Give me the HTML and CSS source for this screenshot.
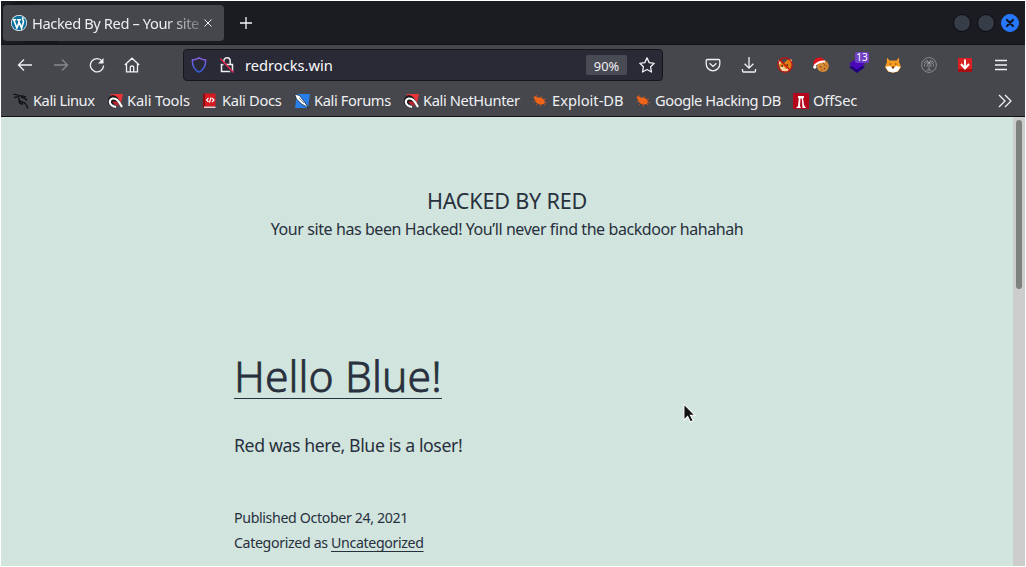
FILE: index.html
```html
<!DOCTYPE html>
<html lang="en">
<head>
<meta charset="utf-8">
<title>Hacked By Red</title>
<link rel="stylesheet" href="styles.css">
</head>
<body>
<div class="window">
  <header class="tabbar">
    <svg class="shade" viewBox="0 0 100 45"><path d="M0 9Q8 2 18 0H42Q18 4 0 17zM18 45Q42 28 55 5L76 10Q65 35 55 45z"/></svg>
    <div class="tab">
      <svg class="wp" viewBox="0 0 16 16"><circle cx="8" cy="8" r="8" fill="#fff"/><circle cx="8" cy="8" r="7.3" fill="#08709f"/><path d="M2 4.8h3.2M6 4.8h4M2.8 5l3.1 8 2.4-6.4M7.4 5l3.1 8 1.9-5.8Q12.6 5.8 11.8 4.6 11 3 12.6 2.5" fill="none" stroke="#fff" stroke-width="1.6"/></svg>
      <span class="tab-title">Hacked By Red – Your site</span>
      <svg class="tab-close" viewBox="0 0 8 8"><path d="M.5.5l7 7M7.5.5l-7 7"/></svg>
    </div>
    <svg class="plus" viewBox="0 0 12 12"><path d="M6 0v12M0 6h12"/></svg>
    <div class="controls">
      <i class="dot"></i><i class="dot"></i>
      <i class="dot close"><svg viewBox="0 0 10 10"><path d="M2 2l6 6M8 2L2 8"/></svg></i>
    </div>
  </header>
  <nav class="toolbar">
    <svg class="ic" viewBox="0 0 16 16"><path d="M15 8H1.5M7 2.5L1.5 8 7 13.500"/></svg>
    <svg class="ic dim" viewBox="0 0 16 16"><path d="M1 8h13.500M9 2.500L14.500 8 9 13.500"/></svg>
    <svg class="ic" viewBox="0 0 16 16"><path d="M13.200 4.200A6.600 6.600 0 1 0 14.600 8.500"/><path d="M14.500 1v5.500H9z" fill="#f5f5f8" stroke="none"/></svg>
    <svg class="ic home" viewBox="0 0 16 16"><path d="M.8 8L8 1.200 15.200 8M2.500 7v7.800h11V7M6.300 14.500V10q0-1 1.700-1t1.700 1v4.500"/></svg>
    <div class="url">
      <svg class="uic" viewBox="0 0 16 16"><defs><linearGradient id="sh" x2="0" y2="1"><stop stop-color="#8a62e8"/><stop offset="1" stop-color="#2f5fe0"/></linearGradient></defs><path d="M8 .8Q11 2.700 14.600 3 15 11.500 8 15.200 1 11.500 1.400 3 5 2.700 8 .8z" fill="none" stroke="url(#sh)" stroke-width="1.400"/></svg>
      <svg class="uic lock" viewBox="0 0 16 16"><path d="M4.800 7V4.200a3.200 3.400 0 0 1 6.400 0V7M2.500 7.500h11v7h-11z" fill="none" stroke="#eee" stroke-width="1.500"/><path d="M1.500 3l12.500 13" stroke="#2a2a37" stroke-width="2.200"/><path d="M1.200 1.500L14.500 15.500" stroke="#e22850" stroke-width="1.500"/></svg>
      <span class="address">redrocks.win</span>
      <span class="zoom">90%</span>
      <svg class="ic star" viewBox="0 0 16 16"><path d="M8 .9l2.200 4.700 5 .7-3.600 3.500.9 5.200L8 12.500l-4.500 2.500.9-5.200L.8 6.300l5-.7z" stroke-linejoin="round"/></svg>
    </div>
    <div class="extensions">
      <svg class="ic" viewBox="0 0 16 16"><path d="M2.500 2.500h11q1.300 0 1.300 1.300V7a6.800 6.800 0 0 1-13.600 0V3.800q0-1.300 1.300-1.300zM4.600 6.200L8 9.400l3.400-3.200"/></svg>
      <svg class="ic" viewBox="0 0 16 16"><path d="M8 0v11M3.600 6.800L8 11.200l4.400-4.400M1.500 12v2q0 1 1 1h11q1 0 1-1v-2"/></svg>
      <svg viewBox="0 0 16 16"><path d="M1 5l1-2 5 3 3-3 4-1 1 6-2 5-5 2-5-3z" fill="#e07c14"/><path d="M1 4l1-1 2 3-2 2zM13 2l2 1v4z" fill="#f3dfc8"/><path d="M3 10l3-1 3 3 4-1-3 3.500-5-.5z" fill="#f6d2a0"/><path d="M4.500 9h1.500M9.500 8H11" stroke="#3f240c" stroke-width="1.300"/><circle cx="8" cy="8" r="7.200" fill="none" stroke="#c8100e" stroke-width="1.200"/><path d="M3 3l10 10" stroke="#c8100e" stroke-width="1.300"/></svg>
      <svg viewBox="0 0 16 16"><circle cx="9.800" cy="9" r="6" fill="#d88b35"/><path d="M11 8h1M6.500 10h2M11 12l1-1M8.500 13h1M13 9h1M10 5.800h1" stroke="#743d15" stroke-width="1.200"/><path d="M.5 9Q0 2 4 1q5-2 8 3L3 8z" fill="#df1418"/><path d="M1.500 8.500Q6 4 12 4.500" fill="none" stroke="#fff" stroke-width="2"/><circle cx="1.800" cy="10" r="1.700" fill="#fff"/></svg>
      <div class="stack"><svg viewBox="0 0 16 16"><path d="M0 10l8-4 8 4-8 6z" fill="#210080"/><path d="M0 7l8-6 8 6-8 5.500z" fill="#4a08b8"/></svg><span class="badge">13</span></div>
      <svg viewBox="0 0 16 16"><path d="M2 .5l2.500 3h7l2.500-3 .2 5L16 10l-3 4.500-5 1.200-5-1.200L0 10l1.800-4.500z" fill="#f59b22"/><path d="M.5 10l4-1L8 11l3.500-2 4 1-3 4.500L8 15.500l-4.500-1z" fill="#fff"/><path d="M4.500 7H6M10 7h1.500M7 10h2L8 11.500z" stroke="#6b3208" fill="#3b1b08"/></svg>
      <svg viewBox="0 0 16 16" class="palm"><circle cx="8" cy="8" r="7.400"/><path d="M8 6v7M5.500 13h5M8 6Q5 2 3 6M8 6q3-4 5 0M8 6Q3 5 3.500 9.500M8 6q5-1 4.500 3.500M8 6Q5.500 7 6 10M8 6q2.500 1 2 4M8 6L6 3M8 6l2-3"/></svg>
      <svg viewBox="0 0 16 16"><path d="M1 1h14v14H1z" fill="#db2024"/><path d="M1 12h14v3H1z" fill="#a70f13"/><path d="M8 2.500v8M4 7l4 4.500L12 7" fill="none" stroke="#fff" stroke-width="2"/></svg>
      <svg class="ic menu" viewBox="0 0 16 16"><path d="M2 3.500h12M2 8h12M2 12.500h12"/></svg>
    </div>
  </nav>
  <nav class="bookmarks">
    <div class="bm b1"><svg viewBox="0 0 16 16"><path d="M.5 1.500Q4 1 6 3q4-.5 7 1M1 4.500Q5 3 6 5.500q0 3 3 3.500t4 2.500 2 4M6 7.500Q5.500 11 10 11M8 4q4 .5 6 3.500" fill="none" stroke="#101114" stroke-width="1.350"/></svg><span>Kali Linux</span></div>
    <div class="bm b2"><svg viewBox="0 0 16 16"><path d="M3 1h13l-2.500 11L9 9z" fill="#e73538"/><path d="M1 7Q1.500 3 6 2q6 1 8 9l-6-3-3 6Q0 12 1 7z" fill="#19191c"/><path d="M15 14L12 9Q9.500 5 5.500 5.500 2 7 3 10t6 4" fill="none" stroke="#fff" stroke-width="2.100"/><path d="M8 2.500L15.500 1.500 13.500 9Q11.500 4 8 2.500z" fill="#e73538"/><path d="M5 9q4-2 7 4L9 12z" fill="#cc1d28"/></svg><span>Kali Tools</span></div>
    <div class="bm b3"><svg viewBox="0 0 16 16"><path d="M2 .5h11.500v13H2z" fill="#d71920"/><path d="M1 .5h2v14.500H1z" fill="#8c0c12"/><path d="M2 13.500h11.500V15H2z" fill="#e9cfcf"/><path d="M6.500 5L4.500 7l2 2M10 5l2 2-2 2M7.500 9.500l1.500-5" fill="none" stroke="#fff" stroke-width="1.200"/></svg><span>Kali Docs</span></div>
    <div class="bm b4"><svg viewBox="0 0 16 16"><path d="M3 1h13l-2 14H1z" fill="#287fe8"/><path d="M.5 1l5 1.500 5 6.500 4 6-7-4-5-5z" fill="#fff" stroke="#16243a" stroke-width=".8"/><path d="M5 5l5 5" stroke="#526578" stroke-width=".7"/></svg><span>Kali Forums</span></div>
    <div class="bm b5"><svg viewBox="0 0 16 16"><path d="M3 1h13l-2.500 11L9 9z" fill="#e73538"/><path d="M1 7Q1.500 3 6 2q6 1 8 9l-6-3-3 6Q0 12 1 7z" fill="#19191c"/><path d="M15 14L12 9Q9.500 5 5.500 5.500 2 7 3 10t6 4" fill="none" stroke="#fff" stroke-width="2.100"/><path d="M8 2.500L15.500 1.500 13.500 9Q11.500 4 8 2.500z" fill="#e73538"/><path d="M5 9q4-2 7 4L9 12z" fill="#cc1d28"/></svg><span>Kali NetHunter</span></div>
    <div class="bm b6"><svg viewBox="0 0 16 16"><path d="M1.500 4Q3 2.500 5 4.500l3 0q4 .5 5 4.500l-1 2-4 .7-3.500-2L3 7z" fill="#f06418"/><path d="M5 4L4 2M8 5l2-2M11 6.500l3-.5M12 9l3 1M4 8L1.500 9M6 10l-2 2M9 11l-1 2.500M12 11l1.500 1.500" stroke="#b9562a" stroke-width=".9"/></svg><span>Exploit-DB</span></div>
    <div class="bm b7"><svg viewBox="0 0 16 16"><path d="M1.500 4Q3 2.500 5 4.500l3 0q4 .5 5 4.500l-1 2-4 .7-3.500-2L3 7z" fill="#f06418"/><path d="M5 4L4 2M8 5l2-2M11 6.500l3-.5M12 9l3 1M4 8L1.500 9M6 10l-2 2M9 11l-1 2.500M12 11l1.500 1.500" stroke="#b9562a" stroke-width=".9"/></svg><span>Google Hacking DB</span></div>
    <div class="bm b8"><svg viewBox="0 0 16 16"><path d="M0 0h16v16H0z" fill="#b5071c"/><path d="M5 3h6v2h-1l1 7 2 3H9.500L8.800 5.500H7.500L7 13l1 2H3l2-2 .8-8H5z" fill="#fff"/></svg><span>OffSec</span></div>
    <svg class="ic more" viewBox="0 0 16 16"><path d="M2 2l6 6-6 6M8 2l6 6-6 6"/></svg>
  </nav>
  <main class="page">
    <div class="content">
      <h1>HACKED BY RED</h1>
      <p class="tagline">Your site has been Hacked! You’ll never find the backdoor hahahah</p>
      <article>
        <h2><a>Hello Blue!</a></h2>
        <p class="text">Red was here, Blue is a loser!</p>
        <p class="meta m1">Published October 24, 2021</p>
        <p class="meta">Categorized as <a class="cat">Uncategorized</a></p>
      </article>
    </div>
    <div class="scroll"><div class="thumb"></div></div>
  </main>
</div>
<svg class="cursor" viewBox="0 0 14 22"><path d="M1 1v17l4-4 3 6 3-1.500-3-5.500h5z" fill="#111" stroke="#fff" stroke-width="1.100"/></svg>
</body>
</html>
```
FILE: styles.css
```css
* { box-sizing: border-box; }
body { margin: 0; width: 1026px; height: 567px; overflow: hidden; background: #fff; font-family: "Noto Sans", sans-serif; }
svg { display: block; flex: none; }
.window { margin: 1px 1px 1px; height: 565px; display: flex; flex-direction: column; overflow: hidden; }
.tabbar { position: relative; height: 44px; flex: none; background: #1a1c21; display: flex; align-items: center; padding-left: 2px; border-bottom: 1px solid #121317; }
.shade { position: absolute; left: 0; top: 0; width: 100px; height: 44px; fill: #141619; }
.tab { position: relative; width: 221px; height: 36px; border-radius: 4px; background: #45474d; display: flex; align-items: center; padding-left: 8px; margin-top: 1px; }
.wp { width: 16px; height: 16px; }
.tab-title { width: 169px; margin-left: 5px; white-space: nowrap; font-size: 14.67px; letter-spacing: -.4px; color: #eeeef0; -webkit-mask-image: linear-gradient(90deg, #000 79%, rgba(0,0,0,.25)); mask-image: linear-gradient(90deg, #000 79%, rgba(0,0,0,.25)); }
.tab-close { width: 8px; height: 8px; margin-left: 3px; fill: none; stroke: #eee; }
.plus { width: 12px; height: 12px; margin-left: 16px; fill: none; stroke: #f5f5f8; stroke-width: 1.3; }
.controls { margin-left: auto; display: flex; gap: 6px; padding-right: 6px; }
.dot { width: 18px; height: 18px; border-radius: 50%; background: #363d49; border: 1px solid #0b0c0f; }
.close { background: #2777ff; border-color: #2777ff; padding: 3px; }
.close svg { width: 10px; height: 10px; fill: none; stroke: #111520; stroke-width: 2.2; stroke-linecap: round; }
.toolbar { height: 40px; flex: none; background: #45474d; display: flex; align-items: center; padding-left: 16px; gap: 20px; }
.ic { width: 16px; height: 16px; fill: none; stroke: #f1f1f4; stroke-width: 1.3; }
.home { margin-left: -1px; margin-right: 1px; }
.dim { opacity: .38; }
.url { width: 480px; height: 32px; margin-left: 22px; background: #2a2a37; border: 1px solid #15161c; border-radius: 4px; display: flex; align-items: center; padding-left: 7px; }
.uic { width: 16px; height: 16px; }
.lock { margin-left: 12px; }
.address { margin-left: 10px; font-size: 14.67px; color: #fafafc; }
.zoom { margin-left: auto; width: 41px; height: 20px; border-radius: 2px; background: #484a54; color: #f0f0f2; font-size: 12.8px; line-height: 22px; text-align: center; }
.star { margin: 0 7px 0 12px; }
.extensions { margin-left: 22px; display: flex; gap: 20px; align-items: center; }
.extensions svg { width: 16px; height: 16px; }
.stack { position: relative; width: 16px; height: 16px; }
.badge { position: absolute; left: 6px; top: -5px; width: 14px; height: 11px; border-radius: 2px; background: #7040c5; color: #fff; font-size: 10px; line-height: 11px; text-align: center; }
.palm { fill: none; stroke: #9a9ba0; stroke-width: .8; }
.bookmarks { height: 32px; flex: none; background: #45474d; border-bottom: 1px solid #101114; display: flex; align-items: center; padding-left: 12px; }
.bm { flex: none; display: flex; align-items: center; gap: 4px; white-space: nowrap; font-size: 14.67px; color: #f0f0f3; }
.bm svg { width: 16px; height: 16px; }
.bm span { margin-top: -2px; }
.b1 { width: 94px; letter-spacing: -.45px; }
.b2 { width: 95px; letter-spacing: -.15px; }
.b3 { width: 92px; letter-spacing: -.33px; }
.b4 { width: 109px; letter-spacing: -.38px; }
.b5 { width: 129px; letter-spacing: -.38px; }
.b6 { width: 103px; }
.b7 { width: 158px; letter-spacing: -.42px; }
.b8 { letter-spacing: -.1px; }
.more { margin: 0 12px 0 auto; }
.page { flex: 1; display: flex; background: #d1e4dd; color: #28303d; }
.content { width: 1012px; padding-top: 69px; }
h1, h2, p { margin: 0; font-weight: 400; white-space: nowrap; }
h1 { font-size: 21.6px; line-height: 29px; text-align: center; letter-spacing: -.2px; }
.tagline { font-size: 16px; line-height: 29px; text-align: center; letter-spacing: -.42px; }
article { padding-left: 233px; padding-top: 105px; }
h2 { height: 54px; font-size: 42.6px; line-height: 53px; font-weight: 300; letter-spacing: .1px; -webkit-text-stroke: .8px #28303d; }
h2 a { display: block; width: 208px; height: 50px; border-bottom: 1px solid #28303d; }
.text { margin-top: 27px; font-size: 17.7px; line-height: 31px; letter-spacing: -.39px; }
.meta { font-size: 14.2px; line-height: 25px; letter-spacing: -.36px; }
.m1 { margin-top: 44px; }
.cat { text-decoration: underline; text-underline-offset: 3px; text-decoration-thickness: 1px; }
.scroll { width: 12px; background: #cdcdcd; padding: 3px 3px; }
.thumb { width: 6px; height: 169px; border-radius: 3px; background: #7e827f; }
.cursor { position: absolute; left: 683px; top: 403px; width: 13px; height: 21px; }
```
